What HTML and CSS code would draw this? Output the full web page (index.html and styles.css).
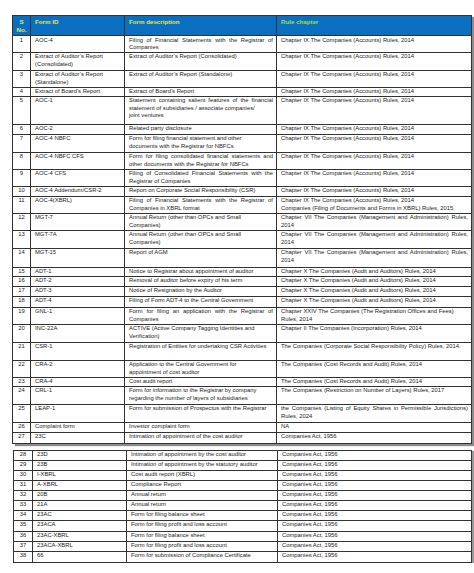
FILE: index.html
```html
<!DOCTYPE html>
<html lang="en">
<head>
<meta charset="utf-8">
<title>Forms</title>
<link rel="stylesheet" href="styles.css">
</head>
<body>
<div class="page">
<table class="grid first">
<colgroup><col class="c1"><col class="c2"><col class="c3"><col class="c4"></colgroup>
<thead>
<tr class="head"><th class="no">S<br>No.</th><th>Form ID</th><th>Form description</th><th class="rule">Rule chapter</th></tr>
</thead>
<tbody>
<tr class="r16"><td class="no">1</td><td>AOC-4</td><td><span class="j">Filing of Financial Statements with the Registrar of</span>Companies</td><td>Chapter IX The Companies (Accounts) Rules, 2014</td></tr>
<tr class="r18"><td class="no">2</td><td><span class="l">Extract of Auditor’s Report</span>(Consolidated)</td><td>Extract of Auditor’s Report (Consolidated)</td><td>Chapter IX The Companies (Accounts) Rules, 2014</td></tr>
<tr class="r17"><td class="no">3</td><td><span class="l">Extract of Auditor’s Report</span>(Standalone)</td><td>Extract of Auditor’s Report (Standalone)</td><td>Chapter IX The Companies (Accounts) Rules, 2014</td></tr>
<tr class="r9"><td class="no">4</td><td>Extract of Board’s Report</td><td>Extract of Board’s Report</td><td>Chapter IX The Companies (Accounts) Rules, 2014</td></tr>
<tr class="r28"><td class="no">5</td><td>AOC-1</td><td><span class="j">Statement containing salient features of the financial</span><span class="l">statement of subsidiaries / associate companies/</span>joint ventures</td><td>Chapter IX The Companies (Accounts) Rules, 2014</td></tr>
<tr class="r10"><td class="no">6</td><td>AOC-2</td><td>Related party disclosure</td><td>Chapter IX The Companies (Accounts) Rules, 2014</td></tr>
<tr class="r18"><td class="no">7</td><td>AOC-4 NBFC</td><td><span class="l">Form for filing financial statement and other</span>documents with the Registrar for NBFCs</td><td>Chapter IX The Companies (Accounts) Rules, 2014</td></tr>
<tr class="r17"><td class="no">8</td><td>AOC-4 NBFC CFS</td><td><span class="j">Form for filing consolidated financial statements and</span>other documents with the Registrar for NBFCs</td><td>Chapter IX The Companies (Accounts) Rules, 2014</td></tr>
<tr class="r17"><td class="no">9</td><td>AOC-4 CFS</td><td><span class="j">Filing of Consolidated Financial Statements with the</span>Registrar of Companies</td><td>Chapter IX The Companies (Accounts) Rules, 2014</td></tr>
<tr class="r10"><td class="no">10</td><td>AOC-4 Addendum/CSR-2</td><td>Report on Corporate Social Responsibility (CSR)</td><td>Chapter IX The Companies (Accounts) Rules, 2014</td></tr>
<tr class="r17"><td class="no">11</td><td>AOC-4(XBRL)</td><td><span class="j">Filing of Financial Statements with the Registrar of</span>Companies in XBRL format</td><td><span class="l">Chapter IX The Companies (Accounts) Rules, 2014</span>Companies (Filing of Documents and Forms in XBRL) Rules, 2015</td></tr>
<tr class="r17"><td class="no">12</td><td>MGT-7</td><td><span class="l">Annual Return (other than OPCs and Small</span>Companies)</td><td><span class="j">Chapter VII The Companies (Management and Administration) Rules,</span>2014</td></tr>
<tr class="r18"><td class="no">13</td><td>MGT-7A</td><td><span class="l">Annual Return (other than OPCs and Small</span>Companies)</td><td><span class="j">Chapter VII The Companies (Management and Administration) Rules,</span>2014</td></tr>
<tr class="r19"><td class="no">14</td><td>MGT-15</td><td>Report of AGM</td><td><span class="j">Chapter VII The Companies (Management and Administration) Rules,</span>2014</td></tr>
<tr class="r9"><td class="no">15</td><td>ADT-1</td><td>Notice to Registrar about appointment of auditor</td><td>Chapter X The Companies (Audit and Auditors) Rules, 2014</td></tr>
<tr class="r10"><td class="no">16</td><td>ADT-2</td><td>Removal of auditor before expiry of his term</td><td>Chapter X The Companies (Audit and Auditors) Rules, 2014</td></tr>
<tr class="r10"><td class="no">17</td><td>ADT-3</td><td>Notice of Resignation by the Auditor</td><td>Chapter X The Companies (Audit and Auditors) Rules, 2014</td></tr>
<tr class="r11"><td class="no">18</td><td>ADT-4</td><td>Filing of Form ADT-4 to the Central Government</td><td>Chapter X The Companies (Audit and Auditors) Rules, 2014</td></tr>
<tr class="r17"><td class="no">19</td><td>GNL-1</td><td><span class="j">Form for filing an application with the Registrar of</span>Companies</td><td><span class="l">Chapter XXIV The Companies (The Registration Offices and Fees)</span>Rules, 2014</td></tr>
<tr class="r18"><td class="no">20</td><td>INC-22A</td><td><span class="l">ACTIVE (Active Company Tagging Identities and</span>Verification)</td><td>Chapter II The Companies (Incorporation) Rules, 2014</td></tr>
<tr class="r18"><td class="no">21</td><td>CSR-1</td><td>Registration of Entities for undertaking CSR Activities</td><td>The Companies (Corporate Social Responsibility Policy) Rules, 2014.</td></tr>
<tr class="r17"><td class="no">22</td><td>CRA-2</td><td><span class="l">Application to the Central Government for</span>appointment of cost auditor</td><td>The Companies (Cost Records and Audit) Rules, 2014</td></tr>
<tr class="r8"><td class="no">23</td><td>CRA-4</td><td>Cost audit report</td><td>The Companies (Cost Records and Audit) Rules, 2014</td></tr>
<tr class="r18"><td class="no">24</td><td>CRL-1</td><td><span class="l">Form for information to the Registrar by company</span>regarding the number of layers of subsidiaries</td><td>The Companies (Restriction on Number of Layers) Rules, 2017</td></tr>
<tr class="r18"><td class="no">25</td><td>LEAP-1</td><td>Form for submission of Prospectus with the Registrar</td><td><span class="j">the Companies (Listing of Equity Shares in Permissible Jurisdictions)</span>Rules, 2024</td></tr>
<tr class="r10"><td class="no">26</td><td>Complaint form</td><td>Investor complaint form</td><td>NA</td></tr>
<tr class="r11"><td class="no">27</td><td>23C</td><td>Intimation of appointment of the cost auditor</td><td>Companies Act, 1956</td></tr>
</tbody>
</table>

<table class="grid second">
<colgroup><col class="d1"><col class="d2"><col class="d3"><col class="d4"></colgroup>
<tbody>
<tr class="r10"><td class="no">28</td><td>23D</td><td>Intimation of appointment by the cost auditor</td><td>Companies Act, 1956</td></tr>
<tr class="r10"><td class="no">29</td><td>23B</td><td>Intimation of appointment by the statutory auditor</td><td>Companies Act, 1956</td></tr>
<tr class="r10"><td class="no">30</td><td>I-XBRL</td><td>Cost audit report (XBRL)</td><td>Companies Act, 1956</td></tr>
<tr class="r10"><td class="no">31</td><td>A-XBRL</td><td>Compliance Report</td><td>Companies Act, 1956</td></tr>
<tr class="r10"><td class="no">32</td><td>20B</td><td>Annual return</td><td>Companies Act, 1956</td></tr>
<tr class="r10"><td class="no">33</td><td>21A</td><td>Annual return</td><td>Companies Act, 1956</td></tr>
<tr class="r10"><td class="no">34</td><td>23AC</td><td>Form for filing balance sheet</td><td>Companies Act, 1956</td></tr>
<tr class="r11"><td class="no">35</td><td>23ACA</td><td>Form for filing profit and loss account</td><td>Companies Act, 1956</td></tr>
<tr class="r10"><td class="no">36</td><td>23AC-XBRL</td><td>Form for filing balance sheet</td><td>Companies Act, 1956</td></tr>
<tr class="r10"><td class="no">37</td><td>23ACA-XBRL</td><td>Form for filing profit and loss account</td><td>Companies Act, 1956</td></tr>
<tr class="r11"><td class="no">38</td><td>66</td><td>Form for submission of Compliance Certificate</td><td>Companies Act, 1956</td></tr>
</tbody>
</table>
</div>
</body>
</html>
```

FILE: styles.css
```css
* { box-sizing: border-box; }
html, body { margin: 0; padding: 0; background: #ffffff; }
body {
  font-family: "Liberation Sans", Arial, sans-serif;
  font-size: 5.85px;
  line-height: 7.6px;
  color: #222222;
}
.page {
  display: flex;
  flex-direction: column;
  gap: 6px;
  padding: 15px 0 0 12px;
}
.grid {
  border-collapse: collapse;
  table-layout: fixed;
}
.first { width: 459px; box-shadow: 3px 2px 1px #8c8c8c; }
.second { width: 458px; margin-left: 1px; box-shadow: 3px 1px 1px #9a9a9a; }
.c1 { width: 18px; }
.c2 { width: 94px; }
.c3 { width: 152px; }
.c4 { width: 195px; }
.d1 { width: 19px; }
.d2 { width: 94px; }
.d3 { width: 151px; }
.d4 { width: 194px; }
.grid td, .grid th {
  border: 1px solid #333333;
  padding: 0.5px 3px 0 4px;
  vertical-align: top;
  text-align: left;
  white-space: nowrap;
  overflow: hidden;
}
.grid td.no, .grid th.no { text-align: center; padding-left: 1px; padding-right: 1px; }
.head { height: 20px; }
.head th {
  background: #0a6fc0;
  color: #e6e84a;
  font-weight: bold;
  font-size: 6.2px;
  line-height: 8px;
  padding-top: 1.5px;
}
.head th.rule { color: #9ede4a; }
.l { display: block; }
.j { display: block; text-align: justify; text-align-last: justify; }
.r8 { height: 8px; }
.r9 { height: 9px; }
.r10 { height: 10px; }
.r11 { height: 11px; }
.r16 { height: 16px; }
.r17 { height: 17px; }
.r18 { height: 18px; }
.r19 { height: 19px; }
.r28 { height: 28px; }
```
